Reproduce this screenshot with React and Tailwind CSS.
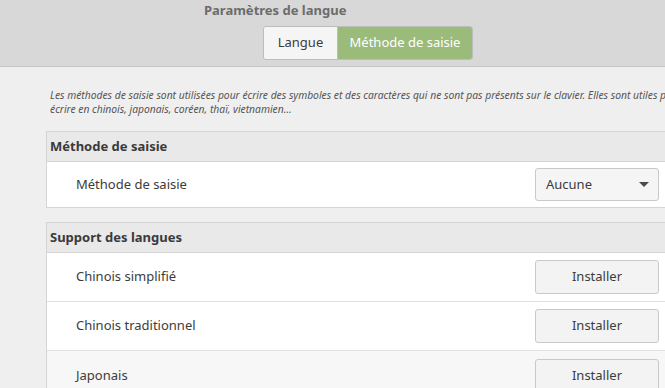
import React from "react";

const langues = [
  { name: "Chinois simplifié" },
  { name: "Chinois traditionnel" },
  { name: "Japonais", hover: true },
];

function Section({ title, children }) {
  return (
    <div className="border border-[#d4d4d4] bg-white">
      <div className="h-[30px] flex items-center pl-[3px] bg-[#e9e9e9] border-b border-[#d4d4d4] text-[13px] font-bold text-[#3a3a3a]">
        {title}
      </div>
      {children}
    </div>
  );
}

function Row({ label, hover, last, tall = true, children }) {
  return (
    <div
      className={`${tall ? "h-[49px]" : "h-[45px]"} flex items-center justify-between pl-[29px] pr-[16px] ${
        hover ? "bg-[#f7f7f7]" : "bg-white"
      } ${last ? "" : "border-b border-[#e2e2e2]"}`}
    >
      <span className="text-[13px] text-[#3c3c3c]">{label}</span>
      {children}
    </div>
  );
}

export default function App() {
  return (
    <div
      className="w-[665px] h-[388px] overflow-hidden bg-[#efefef]"
      style={{ fontFamily: '"Noto Sans", "Open Sans", sans-serif' }}
    >
      {/* Header */}
      <div className="h-[67px] bg-[#d8d8d8] border-b border-[#c6c6c6]">
        <div className="pl-[204px] pt-[1px] text-[13px] font-bold text-[#6c6c6c] leading-[18px]">
          Paramètres de langue
        </div>
        <div className="pl-[263px] pt-[7px] flex">
          <div className="flex h-[34px] rounded-[3px] border border-[#bdbdbd] overflow-hidden text-[13px]">
            <button className="w-[74px] bg-[#f5f5f5] text-[#3c3c3c] border-r border-[#bdbdbd]">Langue</button>
            <button className="w-[134px] bg-[#9bbb7b] text-white">Méthode de saisie</button>
          </div>
        </div>
      </div>

      {/* Content */}
      <div className="w-[700px] pl-[46px] pt-[21px]">
        <p className="pl-[4px] w-[640px] text-[10.3px] italic leading-[14px] text-[#555555]">
          Les méthodes de saisie sont utilisées pour écrire des symboles et des caractères qui ne sont pas présents sur le clavier. Elles sont utiles pour écrire en chinois, japonais, coréen, thaï, vietnamien…
        </p>

        <div className="w-[630px] mt-[15px] flex flex-col gap-[14px]">
          <Section title="Méthode de saisie">
            <Row label="Méthode de saisie" last tall={false}>
              <div className="w-[124px] h-[33px] flex items-center justify-between pl-[10px] pr-[9px] bg-[#f5f5f5] border border-[#c9c9c9] rounded-[3px] text-[13px] text-[#3c3c3c]">
                <span>Aucune</span>
                <svg width="10" height="6" viewBox="0 0 10 6">
                  <path d="M0 0 L10 0 L5 5 Z" fill="#4a4a4a" />
                </svg>
              </div>
            </Row>
          </Section>

          <Section title="Support des langues">
            {langues.map((l, i) => (
              <Row key={l.name} label={l.name} hover={l.hover} last={i === langues.length - 1}>
                <button className="w-[124px] h-[34px] bg-[#f3f3f3] border border-[#c9c9c9] rounded-[3px] text-[13px] text-[#3c3c3c]">
                  Installer
                </button>
              </Row>
            ))}
          </Section>
        </div>
      </div>
    </div>
  );
}
